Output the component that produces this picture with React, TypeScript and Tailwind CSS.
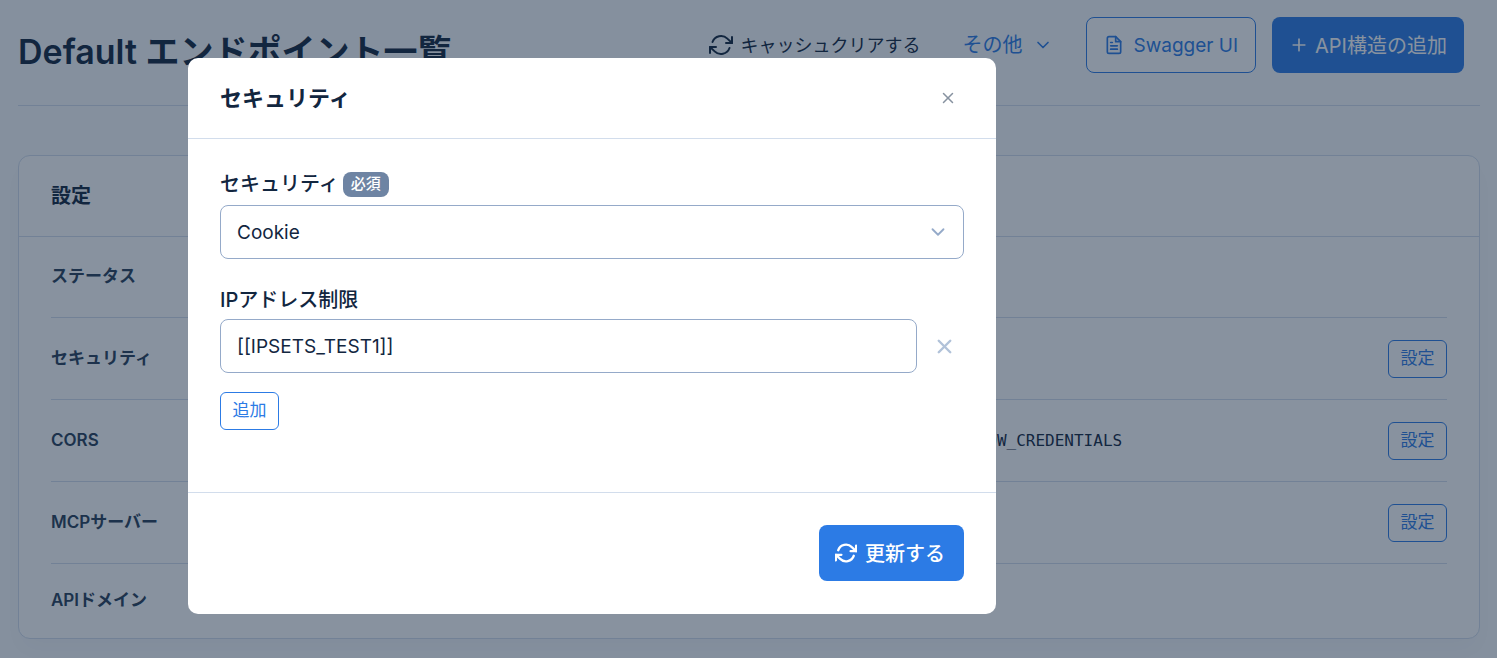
import { useState } from 'react';
import type { FormEvent } from 'react';
import { FiChevronDown, FiFileText, FiPlus, FiRefreshCw, FiX } from 'react-icons/fi';

type Setting = {
  label: string;
  value?: string;
  editable?: boolean;
};

const settings: Setting[] = [
  { label: 'ステータス' },
  { label: 'セキュリティ', editable: true },
  { label: 'CORS', value: 'ALLOW_CREDENTIALS', editable: true },
  { label: 'MCPサーバー', editable: true },
  { label: 'APIドメイン' },
];

function PageHeader() {
  return (
    <header className="flex items-start justify-between border-b border-[#d2ddec] pt-[17px] pb-8">
      <h1 className="pt-3.5 text-[34px] leading-[42px] font-semibold">Default エンドポイント一覧</h1>
      <div className="flex items-center pr-4">
        <button type="button" className="flex items-center gap-2 text-[18px]">
          <FiRefreshCw size={24} />
          キャッシュクリアする
        </button>
        <button type="button" className="ml-[42px] flex items-center gap-2.5 text-[20px] text-[#2c7be5]">
          その他
          <FiChevronDown size={20} />
        </button>
        <a
          href="#swagger"
          className="ml-[33px] flex h-14 items-center gap-2.5 rounded-lg border border-[#2c7be5] bg-white px-[17px] text-[19px] text-[#2c7be5]"
        >
          <FiFileText size={20} />
          <span className="pt-0.5">Swagger UI</span>
        </a>
        <button
          type="button"
          className="ml-4 flex h-14 items-center gap-1.5 rounded-lg bg-[#2c7be5] px-[17px] text-[20px] text-white"
        >
          <FiPlus size={20} />
          <span className="pt-0.5">API構造の追加</span>
        </button>
      </div>
    </header>
  );
}

function SettingsCard() {
  return (
    <section className="mt-[49px] rounded-xl border border-[#d2ddec] bg-white shadow-[0_12px_24px_rgba(18,38,63,0.03)]">
      <h2 className="flex h-[81px] items-center border-b border-[#d2ddec] px-8 text-[20px] font-semibold">設定</h2>
      <ul className="px-8">
        {settings.map(setting => (
          <li
            key={setting.label}
            className="flex h-[82px] items-center border-b border-[#d2ddec] text-[#283e59] first:h-[81px] last:h-[74px] last:border-b-0"
          >
            <span className="w-[65%] text-[17px] font-semibold">{setting.label}</span>
            {setting.value && (
              <code className="font-['DejaVu_Sans_Mono',monospace] text-[16px] text-[#12263f]">{setting.value}</code>
            )}
            {setting.editable && (
              <button
                type="button"
                className="ml-auto h-[38px] w-[59px] rounded-md border border-[#2c7be5] text-[17px] text-[#2c7be5]"
              >
                設定
              </button>
            )}
          </li>
        ))}
      </ul>
    </section>
  );
}

function SecurityModal({ onClose }: { onClose: () => void }) {
  const [security, setSecurity] = useState('cookie');
  const [addresses, setAddresses] = useState<string[]>(['[[IPSETS_TEST1]]']);

  const updateAddress = (index: number, value: string) => {
    setAddresses(addresses.map((address, i) => (i === index ? value : address)));
  };

  const handleSubmit = (e: FormEvent) => {
    e.preventDefault();
    onClose();
  };

  return (
    <div className="fixed inset-0 z-10 overflow-y-auto bg-[#12263f]/50 pt-[58px] pl-[188px]">
      <form
        role="dialog"
        aria-labelledby="security-title"
        onSubmit={handleSubmit}
        className="w-full max-w-[808px] rounded-[10px] bg-white"
      >
        <div className="flex h-[81px] items-center justify-between border-b border-[#d2ddec] px-8">
          <h2 id="security-title" className="text-[22px] font-bold">
            セキュリティ
          </h2>
          <button type="button" aria-label="閉じる" onClick={onClose} className="px-[7px] text-[#8792a0]">
            <FiX size={18} strokeWidth={2} />
          </button>
        </div>

        <div className="px-8 pt-8 pb-[62px]">
          <div className="mb-2 flex h-[26px] items-center gap-1">
            <label htmlFor="security" className="text-[20px] font-medium">
              セキュリティ
            </label>
            <span className="flex h-[25px] items-center rounded-lg bg-[#6e84a3] px-2 text-[15px] font-medium text-white">
              必須
            </span>
          </div>
          <div className="relative">
            <select
              id="security"
              value={security}
              onChange={e => setSecurity(e.target.value)}
              className="h-[54px] w-full appearance-none rounded-lg border border-[#95aac9] bg-white px-4 pt-0.5 text-[19px]"
            >
              <option value="cookie">Cookie</option>
            </select>
            <FiChevronDown
              size={22}
              strokeWidth={2}
              className="pointer-events-none absolute top-4 right-[15px] text-[#95aac9]"
            />
          </div>

          <label htmlFor="address-0" className="mt-7 mb-1.5 block text-[20px] leading-[26px] font-medium">
            IPアドレス制限
          </label>
          {addresses.map((address, index) => (
            <div key={index} className="mb-[19px] flex items-center">
              <input
                id={`address-${index}`}
                type="text"
                value={address}
                onChange={e => updateAddress(index, e.target.value)}
                className="h-[54px] min-w-0 flex-1 rounded-lg border border-[#95aac9] px-4 text-[19px]"
              />
              <button
                type="button"
                aria-label="削除"
                onClick={() => setAddresses(addresses.filter((_, i) => i !== index))}
                className="pr-2 pl-4 text-[#b1c2d9]"
              >
                <FiX size={23} strokeWidth={2.5} />
              </button>
            </div>
          ))}
          <button
            type="button"
            onClick={() => setAddresses([...addresses, ''])}
            className="block h-[38px] w-[59px] rounded-md border border-[#2c7be5] text-[17px] text-[#2c7be5]"
          >
            追加
          </button>
        </div>

        <div className="flex justify-end border-t border-[#d2ddec] px-8 pt-8 pb-[33px]">
          <button
            type="submit"
            className="flex h-14 items-center gap-2 rounded-lg bg-[#2c7be5] pr-[19px] pl-4 text-[20px] font-medium text-white"
          >
            <FiRefreshCw size={22} strokeWidth={2.5} />
            <span className="pt-0.5">更新する</span>
          </button>
        </div>
      </form>
    </div>
  );
}

function App() {
  const [open, setOpen] = useState(true);

  return (
    <div className="min-h-screen bg-[#f9fbfd] pr-[17px] pb-4 pl-[18px] font-['Inter','Noto_Sans_CJK_JP',sans-serif] text-[#12263f]">
      <PageHeader />
      <SettingsCard />
      {open && <SecurityModal onClose={() => setOpen(false)} />}
    </div>
  );
}

export default App;
